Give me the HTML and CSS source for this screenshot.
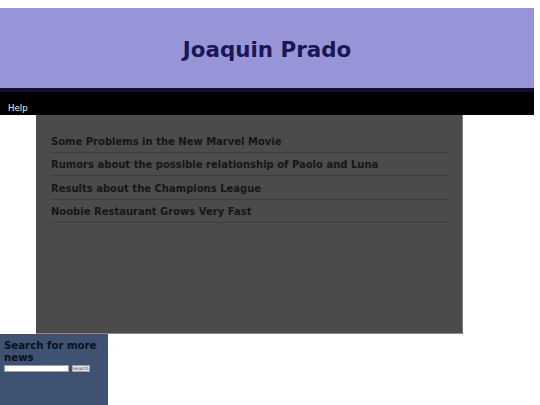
FILE: index.html
```html
<!DOCTYPE html>
<html>
<head>
<meta charset="utf-8">
<title>Joaquin Prado</title>
<link rel="stylesheet" href="styles.css">
</head>
<body>
<header class="site-header">
  <h1 class="site-title">Joaquin Prado</h1>
</header>
<nav class="main-nav">
  <a class="nav-link" href="#">Help</a>
</nav>
<main class="news-box">
  <ul class="news-list">
    <li class="news-item">Some Problems in the New Marvel Movie</li>
    <li class="news-item">Rumors about the possible relationship of Paolo and Luna</li>
    <li class="news-item">Results about the Champions League</li>
    <li class="news-item">Noobie Restaurant Grows Very Fast</li>
  </ul>
</main>
<aside class="sidebar">
  <h3 class="sidebar-title">Search for more news</h3>
  <form class="search-form">
    <input class="search-input" type="text"><button class="search-btn" type="button">search</button>
  </form>
</aside>
</body>
</html>
```

FILE: styles.css
```css
html, body {
  margin: 0;
  padding: 0;
  background: #ffffff;
  font-family: "DejaVu Sans", Verdana, sans-serif;
}

body {
  padding-top: 8px;
}

.site-header {
  width: 534px;
  height: 80px;
  background: #9795d8;
  border-bottom: 4px solid #150d33;
  display: flex;
  align-items: center;
  justify-content: center;
}

.site-title {
  margin: 0;
  font-size: 21.4px;
  font-weight: bold;
  color: #1b1752;
  line-height: 1;
  padding-top: 3px;
}

.main-nav {
  width: 534px;
  height: 23px;
  background: #000000;
  display: flex;
  align-items: flex-end;
  box-sizing: border-box;
  padding: 0 0 2px 8px;
}

.nav-link {
  color: #f4f4f4;
  text-decoration: none;
  font-size: 8.6px;
  line-height: 10px;
}

.news-box {
  display: block;
  margin-left: 36px;
  width: 427px;
  height: 219px;
  box-sizing: border-box;
  background: #4b4b4b;
  border-right: 1px solid #7a7a7a;
  border-bottom: 1px solid #8a8a8a;
  padding: 14.7px 14px 0 15px;
}

.news-list {
  list-style: none;
  margin: 0;
  padding: 0;
}

.news-item {
  font-size: 10px;
  font-weight: bold;
  color: #161616;
  line-height: 12px;
  padding: 6.5px 0 3.8px;
  border-bottom: 1px solid #3d3b4f;
  white-space: nowrap;
}

.sidebar {
  width: 108px;
  height: 80px;
  background: #3f5272;
  box-sizing: border-box;
  padding: 6px 4px 0 4px;
}

.sidebar-title {
  margin: 0;
  font-size: 10.2px;
  font-weight: bold;
  color: #0a0f22;
  line-height: 11.6px;
}

.search-form {
  margin: 1.4px 0 0;
  display: flex;
  align-items: center;
  gap: 3px;
}

.search-input {
  width: 65px;
  height: 7px;
  box-sizing: border-box;
  padding: 0;
  margin: 0;
  border: 1px solid #9aa0aa;
  background: #ffffff;
}

.search-btn {
  width: 18px;
  height: 7px;
  box-sizing: border-box;
  padding: 0;
  margin: 0;
  border: 1px solid #a0a0a0;
  background: #e6e6e6;
  color: #333333;
  font-family: "DejaVu Sans", sans-serif;
  font-size: 4.5px;
  line-height: 5px;
}
```
